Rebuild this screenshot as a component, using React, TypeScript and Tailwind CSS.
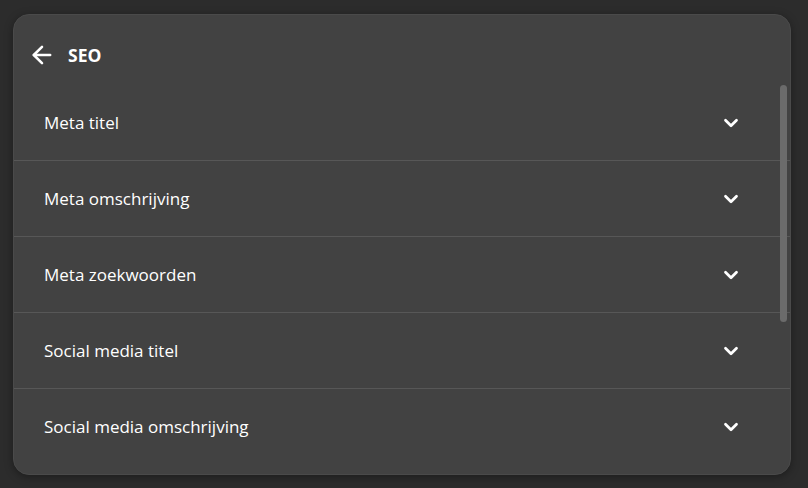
import { ArrowLeft, ChevronDown } from "lucide-react";

const fields = [
  "Meta titel",
  "Meta omschrijving",
  "Meta zoekwoorden",
  "Social media titel",
  "Social media omschrijving",
];

export default function App() {
  return (
    <div className="h-[488px] w-[808px] bg-[#2c2c2c] p-[13px] pt-[14px] font-['Open_Sans',sans-serif] text-white">
      <section className="relative flex h-[461px] w-[778px] flex-col overflow-hidden rounded-[16px] border border-[#4a4a4a] bg-[#424242] shadow-[0_2px_8px_rgba(0,0,0,0.35)]">
        <header className="flex h-[70px] shrink-0 items-center gap-[12px] px-[14px] pt-[10px]">
          <ArrowLeft size={28} strokeWidth={2.2} />
          <h1 className="text-[17.5px] font-bold">SEO</h1>
        </header>

        <div className="flex-1 overflow-hidden">
          {fields.map((item) => (
            <div
              key={item}
              className="flex h-[76px] items-center justify-between border-b border-[#575757] pr-[48px] pl-[30px] last:border-b-0"
            >
              <span className="text-[17px] font-medium">{item}</span>
              <ChevronDown size={22} strokeWidth={3} />
            </div>
          ))}
        </div>

        <div className="absolute top-[70px] right-[3px] h-[237px] w-[7px] rounded-full bg-[#6b6b6b]" />
      </section>
    </div>
  );
}
